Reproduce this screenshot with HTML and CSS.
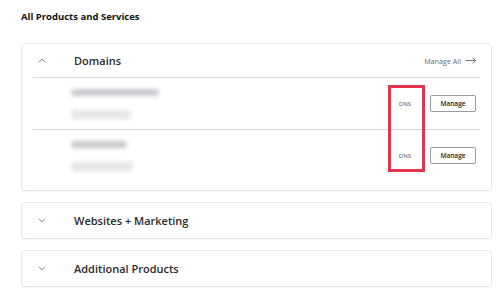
FILE: index.html
```html
<!DOCTYPE html>
<html lang="en">
<head>
    <meta charset="UTF-8">
    <meta name="viewport" content="width=device-width, initial-scale=1.0">
    <title>All Products and Services</title>
    <link rel="stylesheet" href="styles.css">
</head>
<body>
    <main class="page">
        <h2 class="page-title">All Products and Services</h2>

        <section class="card card-open">
            <div class="card-head">
                <span class="chev">
                    <svg width="8" height="5" viewBox="0 0 8 5"><path d="M1 4.2 L4 1.2 L7 4.2" fill="none" stroke="#666" stroke-width="0.9"/></svg>
                </span>
                <h3>Domains</h3>
                <a class="manage-all" href="#">Manage All
                    <svg width="12" height="7" viewBox="0 0 12 7"><path d="M0.5 3.5 H10.5 M7.5 0.7 L10.8 3.5 L7.5 6.3" fill="none" stroke="#666" stroke-width="0.9"/></svg>
                </a>
            </div>

            <div class="domain-list">
                <div class="domain-row">
                    <div class="domain-info">
                        <span class="blur-line name" style="width: 88px"></span>
                        <span class="blur-line meta" style="width: 60px"></span>
                    </div>
                    <span class="dns">DNS</span>
                    <button class="btn">Manage</button>
                </div>

                <div class="domain-row">
                    <div class="domain-info">
                        <span class="blur-line name" style="width: 56px"></span>
                        <span class="blur-line meta" style="width: 62px"></span>
                    </div>
                    <span class="dns">DNS</span>
                    <button class="btn">Manage</button>
                </div>
            </div>

            <div class="highlight"></div>
        </section>

        <section class="card">
            <div class="card-head">
                <span class="chev">
                    <svg width="8" height="5" viewBox="0 0 8 5"><path d="M1 0.8 L4 3.8 L7 0.8" fill="none" stroke="#666" stroke-width="0.9"/></svg>
                </span>
                <h3>Websites + Marketing</h3>
            </div>
        </section>

        <section class="card">
            <div class="card-head">
                <span class="chev">
                    <svg width="8" height="5" viewBox="0 0 8 5"><path d="M1 0.8 L4 3.8 L7 0.8" fill="none" stroke="#666" stroke-width="0.9"/></svg>
                </span>
                <h3>Additional Products</h3>
            </div>
        </section>
    </main>
</body>
</html>
```

FILE: styles.css
```css
body {
    margin: 0;
    padding: 0;
    background-color: #ffffff;
    font-family: "Open Sans", "Noto Sans", Arial, sans-serif;
    color: #1b1b1b;
}

.page {
    padding: 10px 8px 0 21px;
}

.page-title {
    margin: 0 0 19px;
    font-size: 9.5px;
    font-weight: 700;
    line-height: 14px;
    color: #111;
}

.card {
    position: relative;
    border: 1px solid #e6e6e6;
    border-radius: 4px;
    padding: 0 11px;
    margin-bottom: 11px;
    box-shadow: 0 1px 1px rgba(0, 0, 0, 0.03);
}

.card-open {
    padding-bottom: 9px;
}

.card-head {
    display: flex;
    align-items: center;
    height: 35px;
}

.card-open .card-head {
    height: 33px;
    border-bottom: 1px solid #d6d6d6;
}

.chev {
    width: 41px;
    padding-left: 5px;
    box-sizing: border-box;
    display: flex;
    align-items: center;
}

.card-head h3 {
    margin: 0;
    font-size: 11px;
    font-weight: 600;
    color: #2a2a2a;
    flex: 1;
}

.manage-all {
    display: flex;
    align-items: center;
    gap: 4px;
    margin-right: 3px;
    font-size: 7.2px;
    color: #6a6a6a;
    text-decoration: none;
}

.domain-row {
    display: flex;
    align-items: center;
    height: 51px;
}

.domain-row + .domain-row {
    border-top: 1px solid #d6d6d6;
}

.domain-info {
    flex: 1;
    display: flex;
    flex-direction: column;
    gap: 14px;
    padding-left: 38px;
}

.blur-line {
    display: block;
    height: 7px;
    border-radius: 4px;
    filter: blur(2px);
}

.blur-line.name {
    background: #c6c9cd;
}

.blur-line.meta {
    background: #e4e5e7;
    height: 9px;
}

.dns {
    font-size: 6px;
    color: #555;
    margin-right: 19px;
}

.btn {
    width: 46px;
    height: 17px;
    margin-right: 4px;
    padding: 0;
    background: #fff;
    border: 1px solid #9a9a9a;
    border-radius: 2px;
    font-family: "Open Sans", Arial, sans-serif;
    font-size: 6.5px;
    font-weight: 600;
    color: #222;
}

.highlight {
    position: absolute;
    left: 366px;
    top: 41px;
    width: 31px;
    height: 81px;
    border: 3px solid #e2344c;
}
```
